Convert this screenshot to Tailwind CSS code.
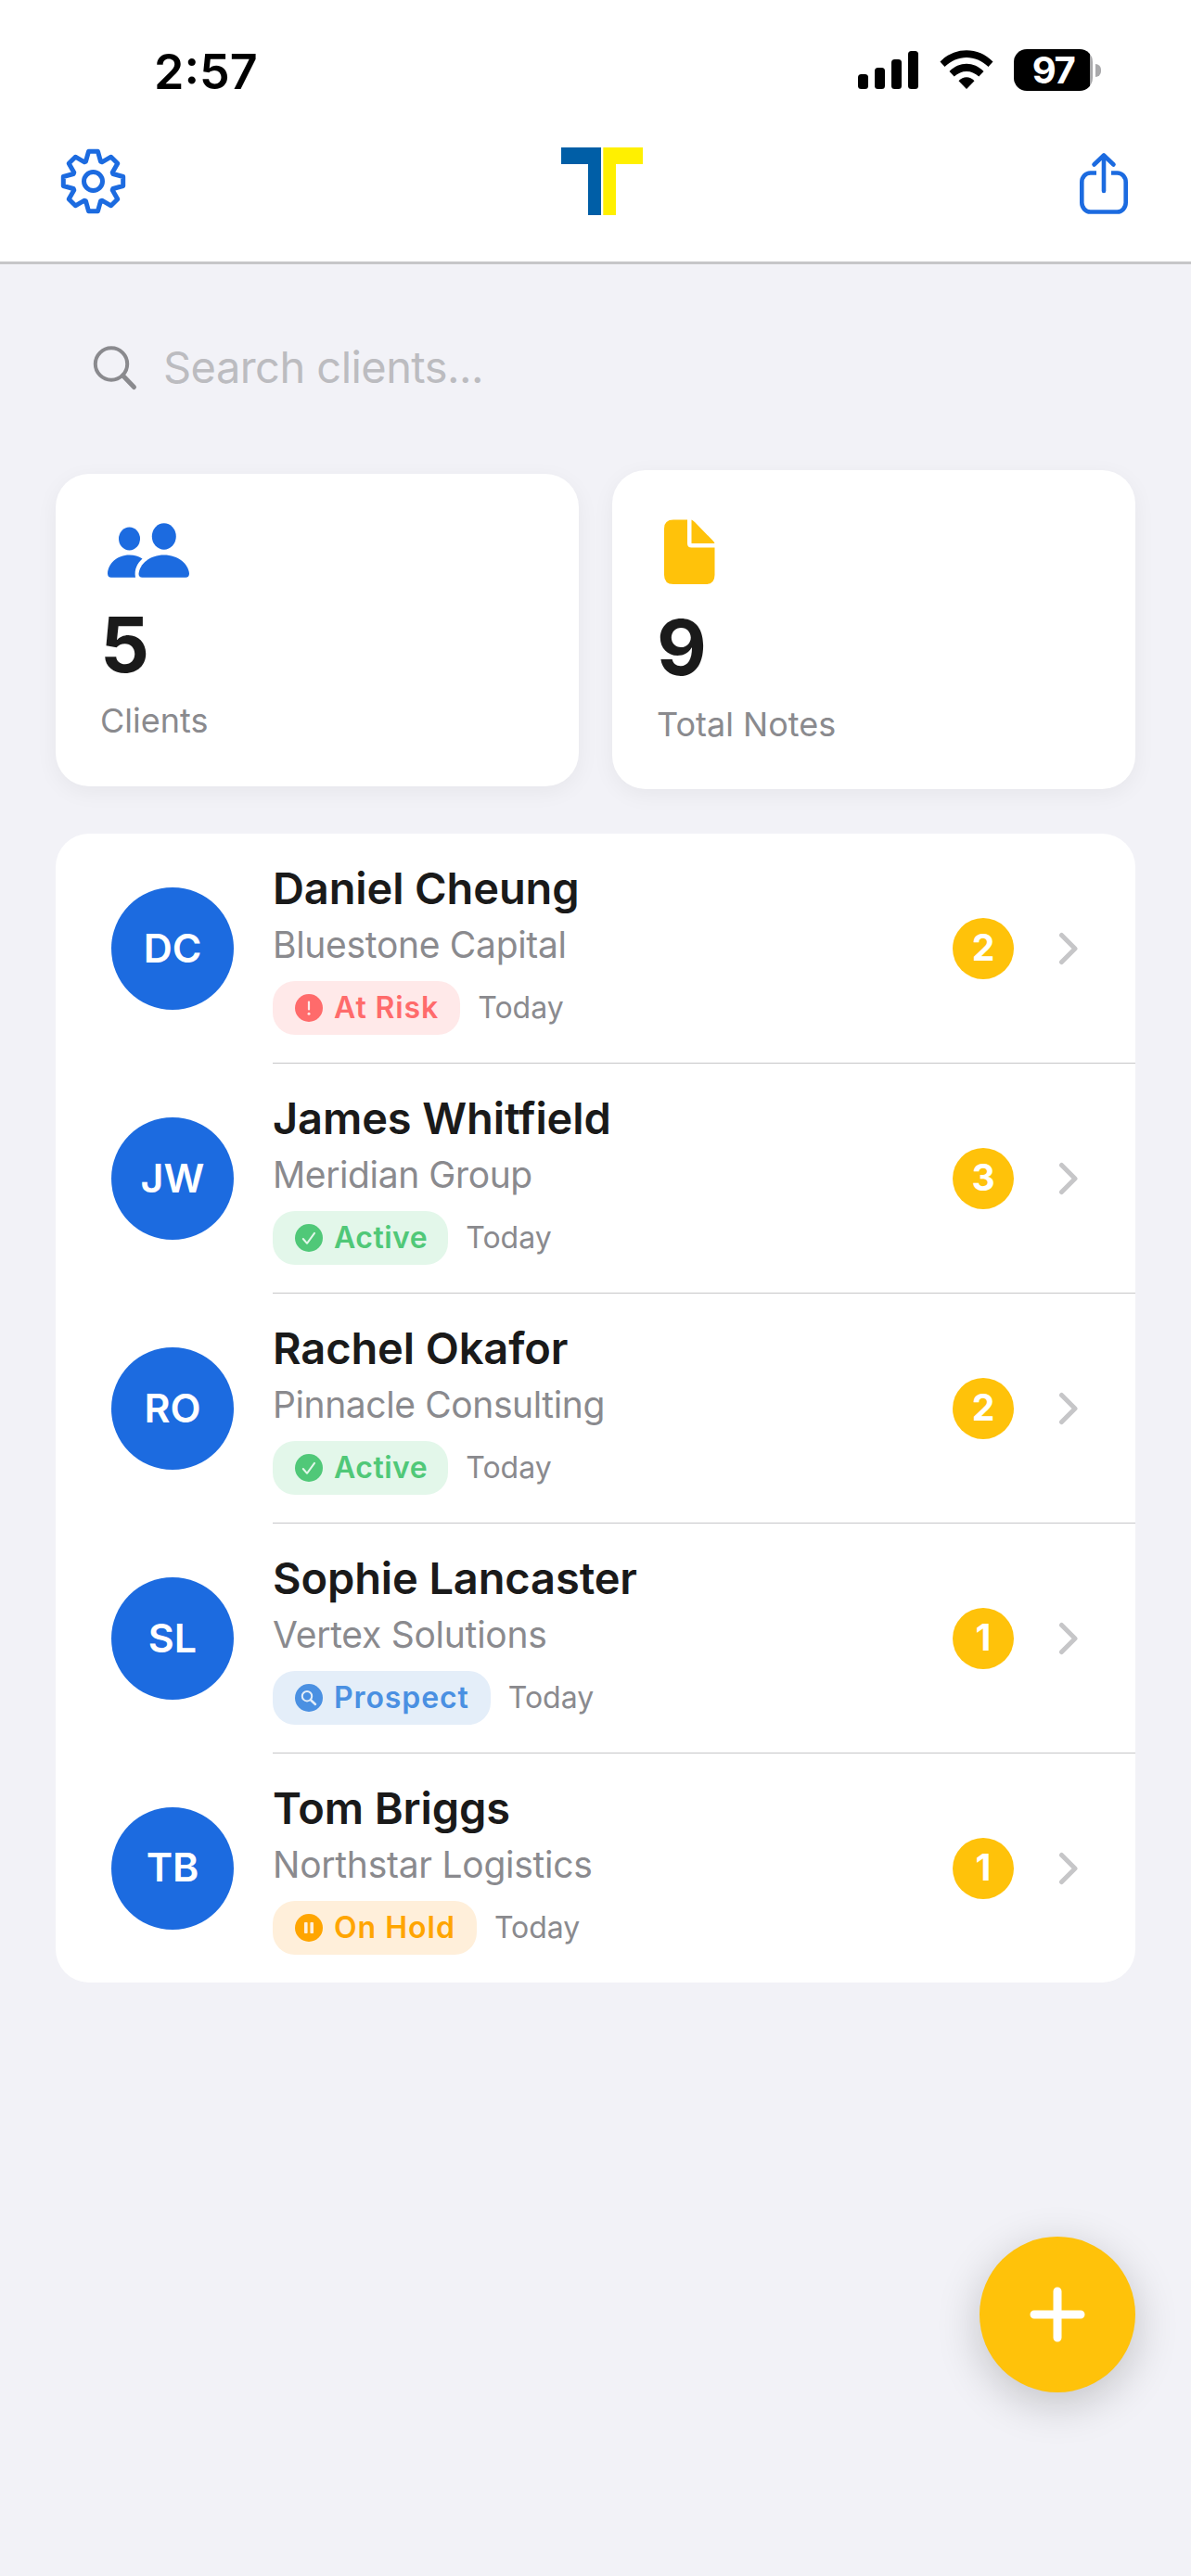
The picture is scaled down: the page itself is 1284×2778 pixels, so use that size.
<!DOCTYPE html>
<html lang="en">
<head>
  <meta charset="UTF-8" />
  <meta name="viewport" content="width=device-width, initial-scale=1" />
  <title>Clients</title>
  <script src="https://cdn.jsdelivr.net/npm/@tailwindcss/browser@4"></script>
</head>

<body class="bg-[#f2f2f7] font-['Inter','Liberation_Sans',sans-serif] text-[#1a1a1a]">

<!-- Shared icons -->
<svg class="hidden">
  <symbol id="icon-risk" viewBox="0 0 30 30">
    <circle cx="15" cy="15" r="15" fill="currentColor" />
    <path d="M15 8.500V16.500" stroke="#ffe9e9" stroke-width="2.200" stroke-linecap="round" />
    <circle cx="15" cy="21.300" r="1.500" fill="#ffe9e9" />
  </symbol>
  <symbol id="icon-active" viewBox="0 0 30 30">
    <circle cx="15" cy="15" r="15" fill="currentColor" />
    <path d="M8.800 16L13 20.800L21 9.800" fill="none" stroke="#e3f7ea" stroke-width="2" stroke-linecap="round" stroke-linejoin="round" />
  </symbol>
  <symbol id="icon-prospect" viewBox="0 0 30 30">
    <circle cx="15" cy="15" r="15" fill="currentColor" />
    <circle cx="13" cy="13.200" r="5.200" fill="none" stroke="#e4eef9" stroke-width="2" />
    <path d="M17.200 17.500L22 22" stroke="#e4eef9" stroke-width="2.400" stroke-linecap="round" />
  </symbol>
  <symbol id="icon-hold" viewBox="0 0 30 30">
    <circle cx="15" cy="15" r="15" fill="currentColor" />
    <rect x="10" y="9" width="3.600" height="12" rx="0.800" fill="#ffefda" />
    <rect x="16.400" y="9" width="3.600" height="12" rx="0.800" fill="#ffefda" />
  </symbol>
  <symbol id="icon-chevron" viewBox="0 0 22 36">
    <path d="M3.500 3.500L18 18L3.500 32.500" fill="none" stroke="#c6c6c8" stroke-width="5" stroke-linecap="round" stroke-linejoin="round" />
  </symbol>
</svg>

<div class="relative w-[1284px] h-[2778px] overflow-hidden">

  <!-- Header -->
  <header class="h-[285px] bg-white border-b-3 border-[#c6c6c8]">
    <!-- Status bar -->
    <div class="h-[144px] pt-[53px] pl-[166px] pr-[97px] flex justify-between items-start text-black">
      <span class="pt-px text-[52px] leading-[48px] font-semibold">2:57</span>
      <div class="flex items-start">
        <svg class="w-[66px] h-[46px] mr-[22px]" viewBox="0 0 66 46">
          <rect x="0" y="27" width="11" height="16" rx="3.500" />
          <rect x="18" y="20" width="11" height="23" rx="3.500" />
          <rect x="36" y="11" width="11" height="32" rx="3.500" />
          <rect x="54" y="2" width="11" height="41" rx="3.500" />
        </svg>
        <svg class="w-[58px] h-[46px] mr-[22px]" viewBox="0 0 58 46">
          <path d="M0.500 13.500C16 -3 42 -3 57.500 13.500L52.500 19C39 5.500 19 5.500 5.500 19Z" />
          <path d="M10.500 24C21 13 37 13 47.500 24L42.300 29.500C34.500 22 23.500 22 15.700 29.500Z" />
          <path d="M20.500 34.200C25.500 29 32.500 29 37.500 34.200L29 43Z" />
        </svg>
        <div class="flex items-center">
          <div class="w-[85px] h-[45px] rounded-[14px] bg-linear-to-r from-black from-[97%] to-[#a9a9ab] to-[97%] flex items-center justify-center">
            <span class="text-white text-[40px] leading-[45px] font-bold tracking-[-1.5px]">97</span>
          </div>
          <div class="ml-[3px] w-[6px] h-[14px] rounded-r-full bg-[#a9a9ab]"></div>
        </div>
      </div>
    </div>

    <!-- Nav bar -->
    <div class="grid grid-cols-3 items-start pl-[65px] pr-[66px]">
      <svg class="mt-[16px] w-[71px] h-[71px]" viewBox="-35.500 -35.500 71 71" fill="none" stroke="#1c6be0" stroke-width="5" stroke-linejoin="round">
        <path d="M-8-21.300L-5-32.200H5L8-21.300L9.400-20.700L19.200-26.300L26.300-19.200L20.700-9.400L21.300-8L32.200-5V5L21.300 8L20.700 9.400L26.300 19.200L19.200 26.300L9.400 20.700L8 21.300L5 32.200H-5L-8 21.300L-9.400 20.700L-19.200 26.300L-26.300 19.200L-20.700 9.400L-21.300 8L-32.200 5V-5L-21.300-8L-20.700-9.400L-26.300-19.200L-19.200-26.300L-9.400-20.700Z" />
        <circle r="10" />
      </svg>
      <svg class="mt-[15px] ml-[15px] w-[88px] h-[73px] justify-self-center" viewBox="0 0 88 73">
        <path fill="#005ea6" d="M0 0H43V73H29V18H0Z" />
        <path fill="#fff000" d="M45.300 0H88V18H59V73H45.300Z" />
      </svg>
      <svg class="mt-[20px] w-[56px] h-[70px] justify-self-end" viewBox="0 0 56 70" fill="none" stroke="#1c6be0" stroke-width="4.600" stroke-linejoin="round">
        <path d="M20 22.500H13.500A9.200 10 0 0 0 4.300 32.500V54.500A9.200 10 0 0 0 13.500 64.500H42.500A9.200 10 0 0 0 51.700 54.500V32.500A9.200 10 0 0 0 42.500 22.500H36" />
        <path stroke-linecap="round" d="M28 42V4M17.500 13.500L28 3.500L38.500 13.500" />
      </svg>
    </div>
  </header>

  <!-- Search -->
  <div class="h-[222px] pt-[84px] pl-[100px] flex items-start">
    <svg class="mt-[3px] w-[50px] h-[52px]" viewBox="0 0 50 52" fill="none" stroke="#8a8a8e" stroke-linecap="round">
      <circle cx="20" cy="20.500" r="17.200" stroke-width="4" />
      <path stroke-width="5" d="M32.500 33L44.500 45.500" />
    </svg>
    <span class="ml-[26px] text-[47px] leading-[54px] tracking-[-0.55px] text-[#bcbcc0]">Search clients...</span>
  </div>

  <!-- Stats -->
  <div class="px-[60px] flex items-center gap-[36px]">
    <div class="flex-1 h-[337px] pt-[53px] pl-[48px] bg-white rounded-[36px] shadow-[0_6px_24px_rgba(0,0,0,0.05)]">
      <svg class="ml-[8px] w-[88px] h-[59px]" viewBox="0 0 88 59" fill="#1c6be0">
        <ellipse cx="23.500" cy="17" rx="11.500" ry="12.500" />
        <ellipse cx="60.800" cy="14.500" rx="13" ry="14.200" />
        <path d="M33.500 55Q33.500 58.700 37.500 58.700H84Q88 58.700 88 54.500C87 44 76 34.500 60.800 34.500S34.500 44 33.500 55Z" />
        <path d="M30 58.700H4Q0 58.700 0 54.500C0.500 44 10 34.500 23.500 34.500Q31.500 34.500 37.500 38.500C32 43.500 28.500 50 30 58.700Z" />
      </svg>
      <p class="mt-[24px] text-[83px] leading-[96px] font-bold">5</p>
      <p class="mt-[12px] text-[36px] leading-[44px] text-[#8a8a8e]">Clients</p>
    </div>
    <div class="flex-1 h-[344px] pt-[53px] pl-[48px] bg-white rounded-[36px] shadow-[0_6px_24px_rgba(0,0,0,0.05)]">
      <svg class="ml-[8px] w-[55px] h-[70px]" viewBox="0 0 55 70" fill="#ffc20a">
        <path d="M10 0.500H25V26Q25 30.500 29.500 30.500H54.500V60Q54.500 70 45 70H10Q0 70 0 60V10Q0 0.500 10 0.500Z" />
        <path d="M29.500 0.500Q31 1 33 3L52.500 23Q54 24.500 54.500 26H29.500Z" />
      </svg>
      <p class="mt-[20px] text-[83px] leading-[96px] font-bold">9</p>
      <p class="mt-[13px] text-[36px] leading-[44px] text-[#8a8a8e]">Total Notes</p>
    </div>
  </div>

  <!-- Client list -->
  <ul class="mt-[48px] mx-[60px] bg-white rounded-[36px]">
    <li class="h-[248px] pl-[60px] flex items-center">
      <div class="w-[132px] h-[132px] pb-[2px] rounded-full bg-[#1c6be0] text-white text-[43px] font-semibold flex items-center justify-center">DC</div>
      <div class="ml-[42px] flex-1 h-full pr-[61px] border-b border-[#c6c6c8] flex items-center">
        <div class="flex-1">
          <h2 class="text-[47px] leading-[58px] font-semibold tracking-[-0.12px]">Daniel Cheung</h2>
          <p class="mt-[2px] text-[39px] leading-[60px] tracking-[-0.3px] text-[#8a8a8e]">Bluestone Capital</p>
          <div class="mt-[9px] flex items-center gap-[19px]">
            <span class="h-[58px] pl-[24px] pr-[23px] rounded-[24px] bg-[#ffe9e9] text-[#ff6b6b] text-[32px] font-semibold tracking-[0.9px] flex items-center gap-[12px]">
              <svg class="w-[30px] h-[30px]"><use href="#icon-risk" /></svg>
              At Risk
            </span>
            <span class="text-[32px] text-[#8a8a8e]">Today</span>
          </div>
        </div>
        <span class="w-[66px] h-[66px] rounded-full bg-[#ffc20a] text-white text-[39px] font-bold flex items-center justify-center">2</span>
        <svg class="ml-[48px] w-[22px] h-[36px]"><use href="#icon-chevron" /></svg>
      </div>
    </li>

    <li class="h-[248px] pl-[60px] flex items-center">
      <div class="w-[132px] h-[132px] pb-[2px] rounded-full bg-[#1c6be0] text-white text-[43px] font-semibold flex items-center justify-center">JW</div>
      <div class="ml-[42px] flex-1 h-full pr-[61px] border-b border-[#c6c6c8] flex items-center">
        <div class="flex-1">
          <h2 class="text-[47px] leading-[58px] font-semibold tracking-[-0.12px]">James Whitfield</h2>
          <p class="mt-[2px] text-[39px] leading-[60px] tracking-[-0.4px] text-[#8a8a8e]">Meridian Group</p>
          <div class="mt-[9px] flex items-center gap-[19px]">
            <span class="h-[58px] pl-[24px] pr-[22px] rounded-[24px] bg-[#e3f7ea] text-[#50c878] text-[32px] font-semibold tracking-[0.5px] flex items-center gap-[12px]">
              <svg class="w-[30px] h-[30px]"><use href="#icon-active" /></svg>
              Active
            </span>
            <span class="text-[32px] text-[#8a8a8e]">Today</span>
          </div>
        </div>
        <span class="w-[66px] h-[66px] rounded-full bg-[#ffc20a] text-white text-[39px] font-bold flex items-center justify-center">3</span>
        <svg class="ml-[48px] w-[22px] h-[36px]"><use href="#icon-chevron" /></svg>
      </div>
    </li>

    <li class="h-[248px] pl-[60px] flex items-center">
      <div class="w-[132px] h-[132px] pb-[2px] rounded-full bg-[#1c6be0] text-white text-[43px] font-semibold flex items-center justify-center">RO</div>
      <div class="ml-[42px] flex-1 h-full pr-[61px] border-b border-[#c6c6c8] flex items-center">
        <div class="flex-1">
          <h2 class="text-[47px] leading-[58px] font-semibold tracking-[-0.12px]">Rachel Okafor</h2>
          <p class="mt-[2px] text-[39px] leading-[60px] tracking-[-0.4px] text-[#8a8a8e]">Pinnacle Consulting</p>
          <div class="mt-[9px] flex items-center gap-[19px]">
            <span class="h-[58px] pl-[24px] pr-[22px] rounded-[24px] bg-[#e3f7ea] text-[#50c878] text-[32px] font-semibold tracking-[0.5px] flex items-center gap-[12px]">
              <svg class="w-[30px] h-[30px]"><use href="#icon-active" /></svg>
              Active
            </span>
            <span class="text-[32px] text-[#8a8a8e]">Today</span>
          </div>
        </div>
        <span class="w-[66px] h-[66px] rounded-full bg-[#ffc20a] text-white text-[39px] font-bold flex items-center justify-center">2</span>
        <svg class="ml-[48px] w-[22px] h-[36px]"><use href="#icon-chevron" /></svg>
      </div>
    </li>

    <li class="h-[248px] pl-[60px] flex items-center">
      <div class="w-[132px] h-[132px] pb-[2px] rounded-full bg-[#1c6be0] text-white text-[43px] font-semibold flex items-center justify-center">SL</div>
      <div class="ml-[42px] flex-1 h-full pr-[61px] border-b border-[#c6c6c8] flex items-center">
        <div class="flex-1">
          <h2 class="text-[47px] leading-[58px] font-semibold tracking-[-0.12px]">Sophie Lancaster</h2>
          <p class="mt-[2px] text-[39px] leading-[60px] tracking-[-0.25px] text-[#8a8a8e]">Vertex Solutions</p>
          <div class="mt-[9px] flex items-center gap-[19px]">
            <span class="h-[58px] pl-[24px] pr-[23px] rounded-[24px] bg-[#e4eef9] text-[#4a90e2] text-[32px] font-semibold tracking-[0.9px] flex items-center gap-[12px]">
              <svg class="w-[30px] h-[30px]"><use href="#icon-prospect" /></svg>
              Prospect
            </span>
            <span class="text-[32px] text-[#8a8a8e]">Today</span>
          </div>
        </div>
        <span class="w-[66px] h-[66px] rounded-full bg-[#ffc20a] text-white text-[39px] font-bold flex items-center justify-center">1</span>
        <svg class="ml-[48px] w-[22px] h-[36px]"><use href="#icon-chevron" /></svg>
      </div>
    </li>

    <li class="h-[247px] pl-[60px] flex items-center">
      <div class="w-[132px] h-[132px] pb-[2px] rounded-full bg-[#1c6be0] text-white text-[43px] font-semibold flex items-center justify-center">TB</div>
      <div class="ml-[42px] flex-1 h-full pr-[61px] flex items-center">
        <div class="flex-1">
          <h2 class="text-[47px] leading-[58px] font-semibold tracking-[-0.12px]">Tom Briggs</h2>
          <p class="mt-[2px] text-[39px] leading-[60px] tracking-[-0.25px] text-[#8a8a8e]">Northstar Logistics</p>
          <div class="mt-[9px] flex items-center gap-[19px]">
            <span class="h-[58px] pl-[24px] pr-[23px] rounded-[24px] bg-[#ffefda] text-[#ffa500] text-[32px] font-semibold tracking-[1px] flex items-center gap-[12px]">
              <svg class="w-[30px] h-[30px]"><use href="#icon-hold" /></svg>
              On Hold
            </span>
            <span class="text-[32px] text-[#8a8a8e]">Today</span>
          </div>
        </div>
        <span class="w-[66px] h-[66px] rounded-full bg-[#ffc20a] text-white text-[39px] font-bold flex items-center justify-center">1</span>
        <svg class="ml-[48px] w-[22px] h-[36px]"><use href="#icon-chevron" /></svg>
      </div>
    </li>
  </ul>

  <!-- Add button -->
  <button class="absolute right-[60px] bottom-[198px] w-[168px] h-[168px] rounded-full bg-[#ffc20a] shadow-[0_12px_48px_rgba(0,0,0,0.2)] flex items-center justify-center">
    <svg class="w-[60px] h-[60px]" viewBox="0 0 60 60" stroke="#fff" stroke-width="9" stroke-linecap="round">
      <path d="M30 5V55M5 30H55" />
    </svg>
  </button>

</div>
</body>
</html>
